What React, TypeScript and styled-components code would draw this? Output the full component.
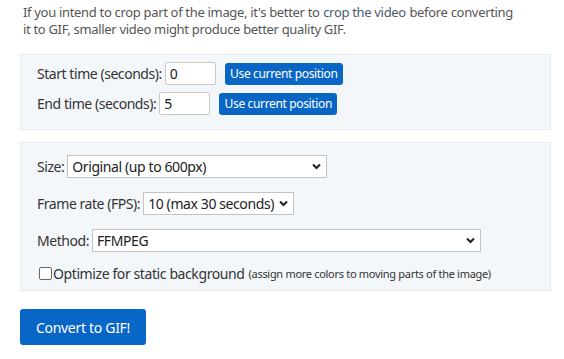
import React, { useState } from 'react';
import styled, { createGlobalStyle } from 'styled-components';

const GlobalStyle = createGlobalStyle`
  body {
    margin: 0;
    background: #ffffff;
    font-family: 'Segoe UI', 'Noto Sans', 'Open Sans', sans-serif;
    color: #333;
  }
`;

const Page = styled.div`
  width: 564px;
  padding: 0 13px 0 20px;
  box-sizing: border-box;
`;

const Note = styled.p`
  margin: 0;
  max-width: 496px;
  padding: 4px 0 0 3px;
  font-size: 13px;
  line-height: 17px;
  letter-spacing: -0.32px;
  color: #555;
`;

const Link = styled.a`
  margin: 0 0.5px;
  color: #4a5a73;
  text-decoration: none;
`;

const Panel = styled.div<{ $top: number; $pad: string; $gap: number }>`
  margin-top: ${(p) => p.$top}px;
  padding: ${(p) => p.$pad};
  background: #f4f7fa;
  border: 1px solid #e6eaee;
  display: flex;
  flex-direction: column;
  gap: ${(p) => p.$gap}px;
`;

const Row = styled.div`
  display: flex;
  align-items: center;
  font-size: 14px;
  letter-spacing: -0.45px;
  color: #333;
  height: 23px;
`;

const Label = styled.label`
  white-space: nowrap;
  margin-right: 3px;
`;

const NumberInput = styled.input`
  width: 51px;
  height: 23px;
  box-sizing: border-box;
  border: 1px solid #c8c8c8;
  border-radius: 2px;
  padding: 0 4px;
  font: inherit;
  font-size: 14px;
  color: #222;
  background: #fff;
`;

const SmallButton = styled.button`
  margin-left: 9px;
  width: 118px;
  height: 22px;
  border: none;
  border-radius: 3px;
  background: #0a66c4;
  color: #fff;
  font-family: inherit;
  font-size: 12px;
  letter-spacing: -0.35px;
  padding: 0;
  cursor: pointer;
`;

const SelectBox = styled.div<{ $w: number }>`
  position: relative;
  width: ${(p) => p.$w}px;
  height: 23px;
`;

const Select = styled.select`
  appearance: none;
  width: 100%;
  height: 100%;
  box-sizing: border-box;
  border: 1px solid #c4c4c4;
  border-radius: 0;
  background: #fff;
  font: inherit;
  font-size: 14px;
  letter-spacing: -0.4px;
  color: #222;
  padding: 0 18px 0 4px;
`;

const Chevron = styled.svg`
  position: absolute;
  right: 6px;
  top: 8px;
  pointer-events: none;
`;

const CheckRow = styled.div`
  display: flex;
  align-items: center;
  height: 14px;
  font-size: 14px;
  letter-spacing: -0.4px;
  color: #333;
  padding-left: 2px;
`;

const Box = styled.input`
  appearance: none;
  width: 13px;
  height: 13px;
  margin: 0 1px 0 0;
  border: 1px solid #666;
  border-radius: 2px;
  background: #fff;
`;

const Hint = styled.span`
  font-size: 11px;
  letter-spacing: -0.3px;
  margin-left: 4px;
  color: #333;
`;

const Convert = styled.button`
  margin-top: 18px;
  width: 126px;
  height: 36px;
  border: none;
  border-radius: 3px;
  background: #0866c6;
  color: #fff;
  font-family: inherit;
  font-size: 14px;
  letter-spacing: -0.3px;
  cursor: pointer;
`;

function Dropdown({ w, value, options }: { w: number; value: string; options: string[] }) {
  const [v, setV] = useState(value);
  return (
    <SelectBox $w={w}>
      <Select value={v} onChange={(e) => setV(e.target.value)}>
        {options.map((o) => (
          <option key={o}>{o}</option>
        ))}
      </Select>
      <Chevron width="9" height="7" viewBox="0 0 9 7">
        <path d="M1 1.5 L4.5 5 L8 1.5" fill="none" stroke="#222" strokeWidth="2" />
      </Chevron>
    </SelectBox>
  );
}

export default function App() {
  const [start, setStart] = useState('0');
  const [end, setEnd] = useState('5');
  return (
    <Page>
      <GlobalStyle />
      <Note>
        If you intend to crop part of the image, it's better to <Link href="#">crop the video</Link> before converting
        it to GIF, smaller video might produce better quality GIF.
      </Note>
      <Panel $top={16} $pad="7px 16px 14px" $gap={7}>
        <Row>
          <Label>Start time (seconds):</Label>
          <NumberInput value={start} onChange={(e) => setStart(e.target.value)} />
          <SmallButton>Use current position</SmallButton>
        </Row>
        <Row>
          <Label>End time (seconds):</Label>
          <NumberInput value={end} onChange={(e) => setEnd(e.target.value)} />
          <SmallButton>Use current position</SmallButton>
        </Row>
      </Panel>
      <Panel $top={12} $pad="12px 16px 10px" $gap={14}>
        <Row>
          <Label>Size:</Label>
          <Dropdown w={260} value="Original (up to 600px)" options={['Original (up to 600px)', '480px', '320px']} />
        </Row>
        <Row>
          <Label>Frame rate (FPS):</Label>
          <Dropdown w={151} value="10 (max 30 seconds)" options={['10 (max 30 seconds)', '20 (max 15 seconds)']} />
        </Row>
        <Row>
          <Label>Method:</Label>
          <Dropdown w={389} value="FFMPEG" options={['FFMPEG', 'Gifsicle']} />
        </Row>
        <CheckRow>
          <Box type="checkbox" />
          Optimize for static background
          <Hint>(assign more colors to moving parts of the image)</Hint>
        </CheckRow>
      </Panel>
      <Convert>Convert to GIF!</Convert>
    </Page>
  );
}
